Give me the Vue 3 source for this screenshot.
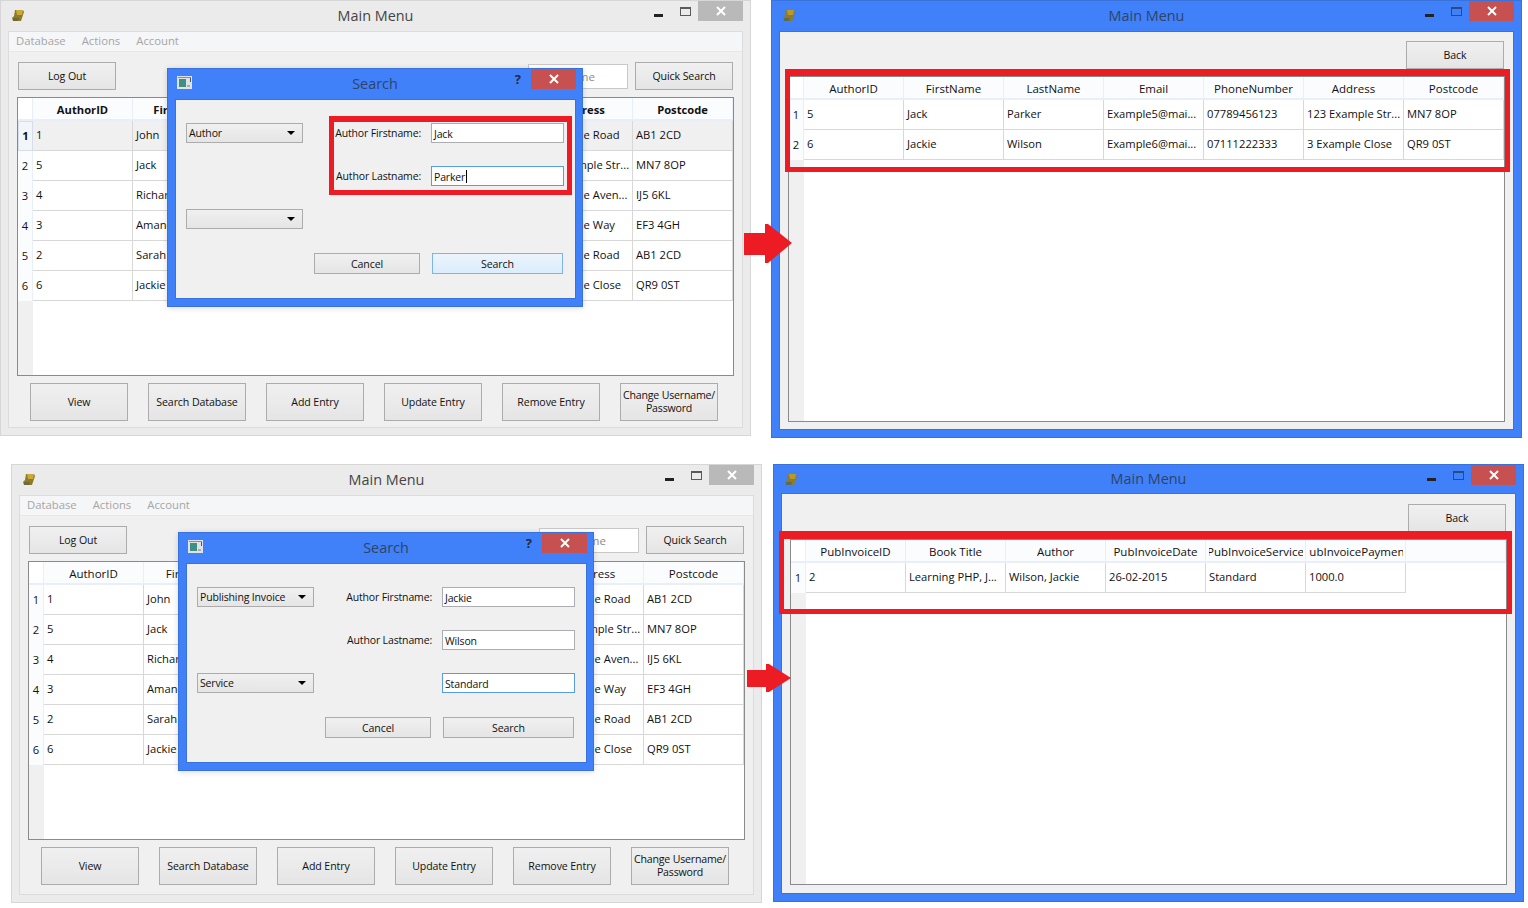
<template>
  <div class="canvas">
    <!-- main menu windows with the search dialog on top -->
    <section v-for="win in mainWindows" :key="win.id" class="window main" :class="win.id">
      <header class="titlebar">
        <svg class="app-icon" width="14" height="14" viewBox="0 0 14 14">
          <polygon points="4,1 12,1 13,3 10,12 2,12 1,9 3,7" fill="#8f7a25" />
          <polygon points="5,1 12,1 11,6 6,6" fill="#c9a93a" />
          <polygon points="2,9 8,9 7,12 2,12" fill="#6e6a3a" />
        </svg>
        <span class="title">Main Menu</span>
        <div class="controls">
          <span class="ctl-min"></span>
          <span class="ctl-max"></span>
          <span class="ctl-close">
            <svg width="10" height="10" viewBox="0 0 10 10"><path d="M1 1L9 9M9 1L1 9" stroke="#fff" stroke-width="2" /></svg>
          </span>
        </div>
      </header>

      <div class="client">
        <nav class="menubar">
          <span>Database</span>
          <span>Actions</span>
          <span>Account</span>
        </nav>
        <div class="toolbar">
          <button class="btn">Log Out</button>
          <div class="quick">
            <div class="edit quick-edit">Enter Name</div>
            <button class="btn">Quick Search</button>
          </div>
        </div>
        <div class="table">
          <div class="head corner"></div>
          <div v-for="(h, k) in mainCols" :key="k" class="head" :class="{ bold: win.boldHead }">
            <div class="clip"><span>{{ h }}</span></div>
          </div>
          <template v-for="(row, i) in authorRows" :key="i">
            <div class="rowhead" :class="{ current: win.selected && i === 0 }">{{ i + 1 }}</div>
            <div v-for="(val, j) in row" :key="j" class="cell" :class="{ selected: win.selected && i === 0 }">{{ val }}</div>
          </template>
        </div>
        <div class="actions">
          <button v-for="a in actionButtons" :key="a" class="btn big">{{ a }}</button>
          <button class="btn big tight">Change Username/<br />Password</button>
        </div>
      </div>

      <div class="dialog">
        <header class="titlebar">
          <svg class="dlg-icon" width="15" height="13" viewBox="0 0 15 13">
            <rect x="0" y="0" width="15" height="13" fill="#dfe3e6" />
            <rect x="1" y="1" width="13" height="1" fill="#8a8f94" />
            <rect x="2" y="3" width="7" height="8" fill="#3f8f85" />
            <rect x="10" y="9" width="3" height="2" fill="#a8adb2" />
            <rect x="13" y="2" width="1" height="4" fill="#555" />
          </svg>
          <span class="title">Search</span>
          <div class="controls">
            <span class="help">?</span>
            <span class="ctl-close red">
              <svg width="10" height="10" viewBox="0 0 10 10"><path d="M1 1L9 9M9 1L1 9" stroke="#fff" stroke-width="2" /></svg>
            </span>
          </div>
        </header>
        <div class="dlg-client">
          <div class="dlg-grid">
            <template v-for="(r, i) in win.fields" :key="i">
              <div>
                <div v-if="r.combo !== undefined" class="combo"><span>{{ r.combo }}</span><i class="tri"></i></div>
              </div>
              <div class="dlg-label">{{ r.label }}</div>
              <div>
                <div v-if="r.value !== undefined" class="edit" :class="{ focus: r.focus }">{{ r.value }}<i v-if="r.caret" class="caret"></i></div>
              </div>
            </template>
          </div>
          <div class="dlg-buttons">
            <button class="btn cancel">Cancel</button>
            <button class="btn go" :class="{ hot: win.hotSearch }">Search</button>
          </div>
        </div>
      </div>
    </section>

    <!-- result windows -->
    <section v-for="res in resultWindows" :key="res.id" class="window result" :class="res.id">
      <header class="titlebar">
        <svg class="app-icon" width="14" height="14" viewBox="0 0 14 14">
          <polygon points="4,1 12,1 13,3 10,12 2,12 1,9 3,7" fill="#8f7a25" />
          <polygon points="5,1 12,1 11,6 6,6" fill="#b59a30" />
          <polygon points="2,9 8,9 7,12 2,12" fill="#5e6a5a" />
        </svg>
        <span class="title">Main Menu</span>
        <div class="controls">
          <span class="ctl-min"></span>
          <span class="ctl-max"></span>
          <span class="ctl-close red">
            <svg width="10" height="10" viewBox="0 0 10 10"><path d="M1 1L9 9M9 1L1 9" stroke="#fff" stroke-width="2" /></svg>
          </span>
        </div>
      </header>
      <div class="client">
        <div class="toolbar back-bar">
          <button class="btn">Back</button>
        </div>
        <div class="table grow" :class="{ open: res.open }">
          <div class="head corner"></div>
          <div v-for="h in res.cols" :key="h" class="head">
            <div class="clip"><span>{{ h }}</span></div>
          </div>
          <div v-if="res.open" class="head"></div>
          <template v-for="(row, i) in res.rows" :key="i">
            <div class="rowhead">{{ i + 1 }}</div>
            <div v-for="(val, j) in row" :key="j" class="cell">{{ val }}</div>
          </template>
        </div>
      </div>
    </section>

    <!-- red annotations -->
    <div class="mark mark-a"></div>
    <div class="mark mark-b"></div>
    <div class="mark mark-c"></div>
    <svg class="arrow arrow-a" width="50" height="41" viewBox="0 0 50 41">
      <polygon points="0,10 21,10 21,1 24,1 48,20 24,40 21,40 21,32 0,32" fill="#ed1c24" />
    </svg>
    <svg class="arrow arrow-b" width="46" height="30" viewBox="0 0 46 30">
      <polygon points="0,6 19,6 19,0 22,0 44,14 22,28 19,28 19,23 0,23" fill="#ed1c24" />
    </svg>
  </div>
</template>

<script setup>
// columns 3-5 sit behind the dialog in the main windows
const mainCols = ['AuthorID', 'FirstName', '', '', '', 'Address', 'Postcode']
const authorRows = [
  ['1', 'John', '', '', '', '1 Example Road', 'AB1 2CD'],
  ['5', 'Jack', '', '', '', '123 Example Str...', 'MN7 8OP'],
  ['4', 'Richard', '', '', '', '4 Example Aven...', 'IJ5 6KL'],
  ['3', 'Amanda', '', '', '', '7 Example Way', 'EF3 4GH'],
  ['2', 'Sarah', '', '', '', '1 Example Road', 'AB1 2CD'],
  ['6', 'Jackie', '', '', '', '3 Example Close', 'QR9 0ST']
]
const actionButtons = ['View', 'Search Database', 'Add Entry', 'Update Entry', 'Remove Entry']

const mainWindows = [
  {
    id: 'win-a',
    boldHead: true,
    selected: true,
    hotSearch: true,
    fields: [
      { combo: 'Author', label: 'Author Firstname:', value: 'Jack' },
      { label: 'Author Lastname:', value: 'Parker', focus: true, caret: true },
      { combo: '' }
    ]
  },
  {
    id: 'win-c',
    boldHead: false,
    selected: false,
    hotSearch: false,
    fields: [
      { combo: 'Publishing Invoice', label: 'Author Firstname:', value: 'Jackie' },
      { label: 'Author Lastname:', value: 'Wilson' },
      { combo: 'Service', value: 'Standard', focus: true }
    ]
  }
]

const resultWindows = [
  {
    id: 'win-b',
    open: false,
    cols: ['AuthorID', 'FirstName', 'LastName', 'Email', 'PhoneNumber', 'Address', 'Postcode'],
    rows: [
      ['5', 'Jack', 'Parker', 'Example5@mai...', '07789456123', '123 Example Str...', 'MN7 8OP'],
      ['6', 'Jackie', 'Wilson', 'Example6@mai...', '07111222333', '3 Example Close', 'QR9 0ST']
    ]
  },
  {
    id: 'win-d',
    open: true,
    cols: ['PubInvoiceID', 'Book Title', 'Author', 'PubInvoiceDate', 'PubInvoiceService', 'PubInvoicePayment'],
    rows: [['2', 'Learning PHP, J...', 'Wilson, Jackie', '26-02-2015', 'Standard', '1000.0']]
  }
]
</script>

<style scoped>
.canvas {
  position: relative;
  width: 1528px;
  height: 908px;
  overflow: hidden;
  background: #fff;
  font-family: "Open Sans", "Liberation Sans", sans-serif;
  font-size: 11px;
  color: #111;
}

/* windows sit freely on the canvas, like on a desktop */
.window {
  position: absolute;
  box-sizing: border-box;
  width: 751px;
  display: flex;
  flex-direction: column;
}
.main {
  background: #ebebeb;
  border: 1px solid #d6d6d6;
}
.result {
  background: #4080f8;
  border: 1px solid #3a72dc;
}
.win-a { left: 0; top: 0; height: 436px; }
.win-c { left: 11px; top: 464px; height: 439px; }
.win-b { left: 771px; top: 0; height: 438px; }
.win-d { left: 773px; top: 464px; height: 438px; }

/* title bar */
.titlebar {
  display: grid;
  grid-template-columns: 1fr auto 1fr;
  height: 30px;
  flex: none;
}
.win-d .titlebar { height: 28px; }
.title {
  font-size: 14.4px;
  line-height: 29px;
  color: #444;
}
.win-d .title { line-height: 28px; }
.result .title { color: #2f4468; }
.app-icon { margin: 8px 0 0 10px; }
.controls {
  display: flex;
  justify-content: flex-end;
  align-items: flex-start;
  padding-right: 7px;
}
.ctl-min {
  width: 9px;
  height: 3px;
  margin-top: 13px;
  background: #222;
}
.ctl-max {
  box-sizing: border-box;
  width: 11px;
  height: 9px;
  margin: 6px 7px 0 17px;
  border: 1px solid #5a5a5a;
  border-top-width: 2px;
}
.result .ctl-max { border-color: #2c4a80; }
.ctl-close {
  display: flex;
  align-items: center;
  justify-content: center;
  width: 45px;
  height: 20px;
  background: #b9b9b9;
}
.ctl-close.red { background: #c75050; }

/* client area */
.client {
  flex: 1;
  display: flex;
  flex-direction: column;
  margin: 0 7px 7px;
  min-height: 0;
  background: #f0f0f0;
  border: 1px solid #dcdcdc;
}
.result .client { border-color: #3a72dc; }
.menubar {
  box-sizing: border-box;
  display: flex;
  gap: 16px;
  height: 20px;
  padding-left: 7px;
  font-size: 11.3px;
  line-height: 18px;
  color: #a6a6a6;
  background: #f5f6f7;
  border-bottom: 1px solid #e8e8e8;
}
.toolbar {
  display: flex;
  justify-content: space-between;
  align-items: flex-start;
  padding: 10px 9px 0 9px;
}
.back-bar {
  justify-content: flex-end;
  padding-top: 9px;
}
.win-d .back-bar { padding-top: 10px; }
.quick {
  display: flex;
  gap: 7px;
  align-items: center;
}
.btn {
  box-sizing: border-box;
  width: 98px;
  height: 28px;
  padding: 0 0 1px;
  font: inherit;
  font-size: 10.6px;
  letter-spacing: -0.1px;
  color: #111;
  white-space: nowrap;
  background: linear-gradient(#f0f0f0, #e5e5e5);
  border: 1px solid #acacac;
}
.btn.big { height: 38px; }
.btn.tight { line-height: 13px; letter-spacing: -0.2px; }

.edit {
  box-sizing: border-box;
  height: 20px;
  padding: 1px 0 0 2px;
  font-size: 10.5px;
  letter-spacing: -0.15px;
  line-height: 18px;
  background: #fff;
  border: 1px solid #abadb3;
  white-space: nowrap;
}
.edit.focus { border-color: #569de5; }
.quick-edit {
  width: 100px;
  height: 25px;
  font-size: 11.5px;
  letter-spacing: 0;
  line-height: 22px;
  color: #8a8a8a;
  border-color: #c8c8c8;
}
.caret {
  display: inline-block;
  width: 1px;
  height: 13px;
  margin-left: 1px;
  vertical-align: -2px;
  background: #000;
}

/* tables */
.table {
  box-sizing: border-box;
  display: grid;
  grid-template-columns: 15px repeat(7, 100px);
  grid-template-rows: 23px;
  grid-auto-rows: 30px;
  align-content: start;
  width: 717px;
  height: 279px;
  margin: 7px 0 0 8px;
  overflow: hidden;
  font-size: 11.2px;
  background: linear-gradient(90deg, #f0f0f0 15px, #fff 15px);
  border: 1px solid #8a8a8a;
}
.table.grow { height: 346px; }
.table.open { grid-template-columns: 15px repeat(6, 100px) 1fr; }
.head {
  box-sizing: border-box;
  display: flex;
  justify-content: center;
  align-items: center;
  padding-top: 1px;
  font-size: 11.5px;
  white-space: nowrap;
  background: #fbfcfe;
  border-right: 1px solid #e8eff9;
  border-bottom: 2px solid #e8eff9;
}
.clip {
  display: flex;
  justify-content: center;
  width: 94px;
  overflow: hidden;
}
.clip span { flex: none; }
.head.bold { font-size: 11.2px; font-weight: 700; }
.corner { background: #fff; }
.rowhead {
  grid-column: 1;
  box-sizing: border-box;
  display: flex;
  justify-content: center;
  align-items: center;
  padding-bottom: 2px;
  background: #fbfcfe;
  border-right: 1px solid #e8eff9;
}
.rowhead.current {
  font-weight: 700;
  background: #f2f6fb;
  border: 1px solid #d5dfec;
}
.cell {
  box-sizing: border-box;
  padding-left: 3px;
  line-height: 28px;
  white-space: nowrap;
  overflow: hidden;
  background: #fff;
  border-right: 1px solid #d8d8d8;
  border-bottom: 1px solid #d8d8d8;
}
.cell.selected { background: #f0f0f0; }

.actions {
  display: flex;
  gap: 20px;
  padding: 7px 0 0 21px;
}

/* search dialog, overlays the main window */
.dialog {
  position: absolute;
  left: 166px;
  top: 67px;
  box-sizing: border-box;
  width: 416px;
  height: 239px;
  display: flex;
  flex-direction: column;
  background: #4080f8;
  border: 1px solid #3a72dc;
  box-shadow: 0 1px 6px rgba(0, 0, 0, 0.15);
}
.dialog .title {
  line-height: 30px;
  color: #2f4468;
}
.dlg-icon { margin: 7px 0 0 9px; }
.dialog .controls { padding-right: 6px; }
.help {
  margin: 1px 10px 0 0;
  font-size: 13px;
  font-weight: 700;
  color: #1c2c48;
}
.dlg-client {
  box-sizing: border-box;
  flex: 1;
  margin: 0 6px 7px 7px;
  padding: 23px 0 0 10px;
  background: #f0f0f0;
  border: 1px solid #3a72dc;
}
.dlg-grid {
  display: grid;
  grid-template-columns: 117px 118px 143px;
  grid-template-rows: repeat(3, 20px);
  row-gap: 23px;
}
.dlg-label {
  font-size: 10.5px;
  letter-spacing: -0.15px;
  line-height: 20px;
  text-align: right;
  white-space: nowrap;
}
.dlg-grid > div:nth-child(3n) .edit { margin-left: 10px; }
.combo {
  box-sizing: border-box;
  display: flex;
  justify-content: space-between;
  align-items: center;
  height: 20px;
  padding: 0 5px 1px 2px;
  font-size: 10.5px;
  letter-spacing: -0.15px;
  background: linear-gradient(#f0f0f0, #e5e5e5);
  border: 1px solid #acacac;
}
.tri {
  width: 0;
  height: 0;
  margin: 1px 2px 0 0;
  border: 4px solid transparent;
  border-top: 4px solid #000;
  border-bottom: none;
}
.dlg-buttons {
  display: flex;
  gap: 12px;
  margin: 24px 0 0 128px;
}
.cancel { width: 106px; height: 21px; padding: 0; }
.go { width: 131px; height: 21px; padding: 0; }
.go.hot {
  background: linear-gradient(#ebf4fc, #dcecfc);
  border-color: #7eb4ea;
}

/* red annotation rectangles and arrows */
.mark {
  position: absolute;
  box-sizing: border-box;
  border: 5px solid #ed1c24;
  pointer-events: none;
}
.mark-a { left: 329px; top: 116px; width: 243px; height: 79px; border-top-width: 6px; }
.mark-b { left: 785px; top: 69px; width: 725px; height: 103px; border-top-width: 7px; }
.mark-c { left: 779px; top: 531px; width: 733px; height: 83px; border-top-width: 8px; }
.arrow { position: absolute; }
.arrow-a { left: 744px; top: 223px; }
.arrow-b { left: 747px; top: 664px; }
</style>
